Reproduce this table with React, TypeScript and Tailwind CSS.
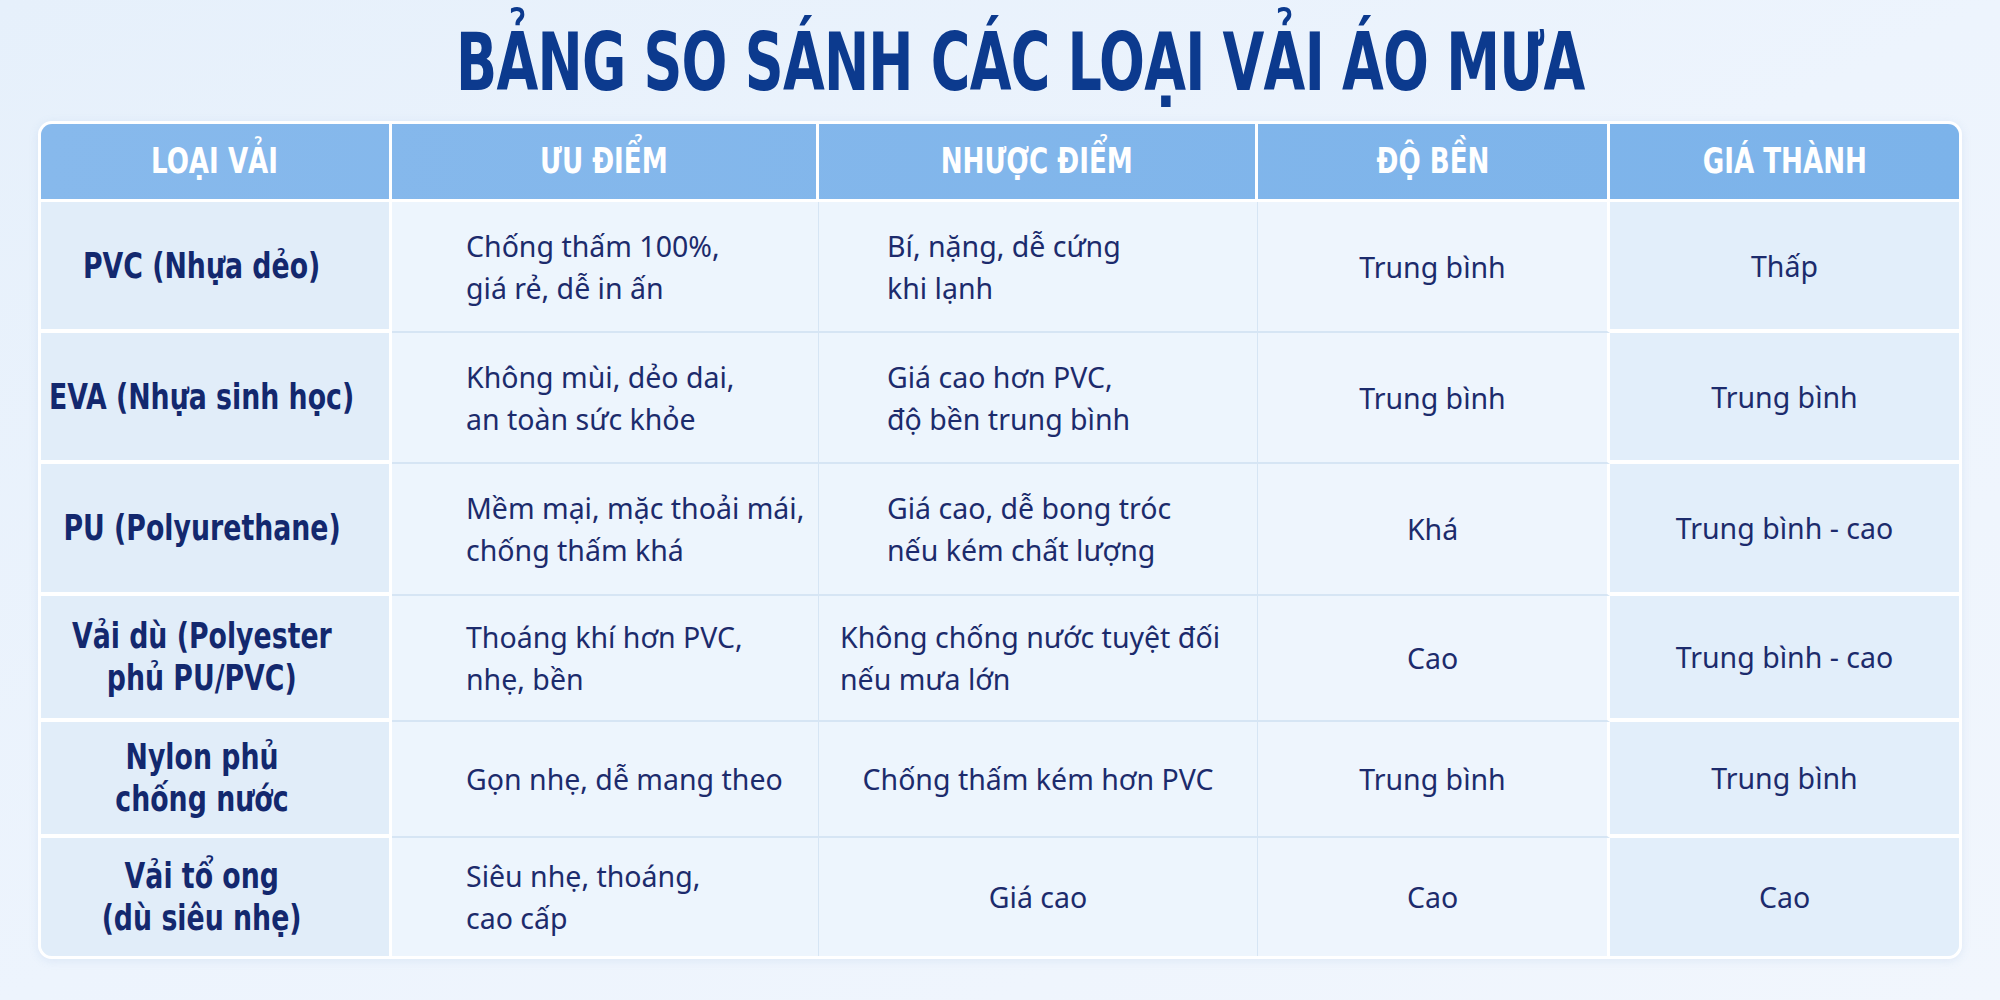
const rows = [
  {
    h: "h-[131px]",
    name: ["PVC (Nhựa dẻo)"],
    pros: ["Chống thấm 100%,", "giá rẻ, dễ in ấn"],
    cons: ["Bí, nặng, dễ cứng", "khi lạnh"],
    consPad: "pl-[68px]",
    dur: "Trung bình",
    price: "Thấp",
  },
  {
    h: "h-[131px]",
    name: ["EVA (Nhựa sinh học)"],
    pros: ["Không mùi, dẻo dai,", "an toàn sức khỏe"],
    cons: ["Giá cao hơn PVC,", "độ bền trung bình"],
    consPad: "pl-[68px]",
    dur: "Trung bình",
    price: "Trung bình",
  },
  {
    h: "h-[132px]",
    name: ["PU (Polyurethane)"],
    pros: ["Mềm mại, mặc thoải mái,", "chống thấm khá"],
    cons: ["Giá cao, dễ bong tróc", "nếu kém chất lượng"],
    consPad: "pl-[68px]",
    dur: "Khá",
    price: "Trung bình - cao",
  },
  {
    h: "h-[126px]",
    name: ["Vải dù (Polyester", "phủ PU/PVC)"],
    pros: ["Thoáng khí hơn PVC,", "nhẹ, bền"],
    cons: ["Không chống nước tuyệt đối", "nếu mưa lớn"],
    consPad: "pl-[21px]",
    dur: "Cao",
    price: "Trung bình - cao",
  },
  {
    h: "h-[116px]",
    name: ["Nylon phủ", "chống nước"],
    pros: ["Gọn nhẹ, dễ mang theo"],
    cons: ["Chống thấm kém hơn PVC"],
    consPad: "justify-center",
    dur: "Trung bình",
    price: "Trung bình",
  },
  {
    h: "h-[118px]",
    name: ["Vải tổ ong", "(dù siêu nhẹ)"],
    pros: ["Siêu nhẹ, thoáng,", "cao cấp"],
    cons: ["Giá cao"],
    consPad: "justify-center",
    dur: "Cao",
    price: "Cao",
  },
];

const heads = ["LOẠI VẢI", "ƯU ĐIỂM", "NHƯỢC ĐIỂM", "ĐỘ BỀN", "GIÁ THÀNH"];
const cols = "grid grid-cols-[351px_427px_439px_352px_349px]";
const narrow = "font-['DejaVu_Sans_Condensed',sans-serif]";
const body = "font-['Noto_Sans',sans-serif] text-[28.5px] leading-[42px] text-[#1c2b6c]";

export default function App() {
  return (
    <div className="w-[2000px] h-[1000px] bg-gradient-to-br from-[#e6f0fb] via-[#edf4fd] to-[#f1f6fd] overflow-hidden">
      <div className="h-[121px] flex items-center justify-center pt-[4px] pl-[40px]">
        <h1 className={`${narrow} font-bold text-[80px] leading-none tracking-[-1px] text-[#0c3a8e] whitespace-nowrap inline-block scale-x-[0.75]`}>
          BẢNG SO SÁNH CÁC LOẠI VẢI ÁO MƯA
        </h1>
      </div>

      <div className="mx-[38px] border-[3px] border-white rounded-[14px] overflow-hidden shadow-[0_2px_10px_rgba(120,160,210,0.15)]">
        {/* header */}
        <div className={`${cols} h-[78px] bg-gradient-to-r from-[#87b9ec] to-[#7cb3ea] border-b-[3px] border-white`}>
          {heads.map((t, i) => (
            <div
              key={t}
              className={`flex items-center justify-center ${i < 4 ? "border-r-[3px] border-white" : ""}`}
            >
              <span className={`${narrow} font-bold text-[35px] text-white whitespace-nowrap inline-block scale-x-[0.83]`}>{t}</span>
            </div>
          ))}
        </div>

        {rows.map((r, ri) => {
          const last = ri === rows.length - 1;
          return (
            <div key={ri} className={`${cols} ${r.h}`}>
              <div
                className={`flex flex-col items-center justify-center pr-[26px] bg-[#e1edf9] border-r-[3px] border-white ${last ? "" : "border-b-[4px]"} text-center`}
              >
                {r.name.map((l) => (
                  <span
                    key={l}
                    className={`${narrow} font-bold text-[35px] leading-[42px] text-[#13286e] whitespace-nowrap inline-block scale-x-[0.85]`}
                  >
                    {l}
                  </span>
                ))}
              </div>
              <div
                className={`flex flex-col justify-center pl-[74px] bg-[#edf5fd] border-r border-[#d6e5f4] ${last ? "" : "border-b-2"} ${body}`}
              >
                {r.pros.map((l) => (
                  <span key={l} className="whitespace-nowrap">{l}</span>
                ))}
              </div>
              <div
                className={`flex items-center ${r.consPad} bg-[#edf5fd] border-r border-[#d6e5f4] ${last ? "" : "border-b-2"} ${body}`}
              >
                <div className="flex flex-col">
                  {r.cons.map((l) => (
                    <span key={l} className="whitespace-nowrap">{l}</span>
                  ))}
                </div>
              </div>
              <div
                className={`flex items-center justify-center bg-[#eef5fd] border-r-[3px] border-r-white border-[#d6e5f4] ${last ? "" : "border-b-2"} ${body}`}
              >
                {r.dur}
              </div>
              <div
                className={`flex items-center justify-center bg-[#e2eefa] border-white ${last ? "" : "border-b-[4px]"} ${body}`}
              >
                {r.price}
              </div>
            </div>
          );
        })}
      </div>
    </div>
  );
}
